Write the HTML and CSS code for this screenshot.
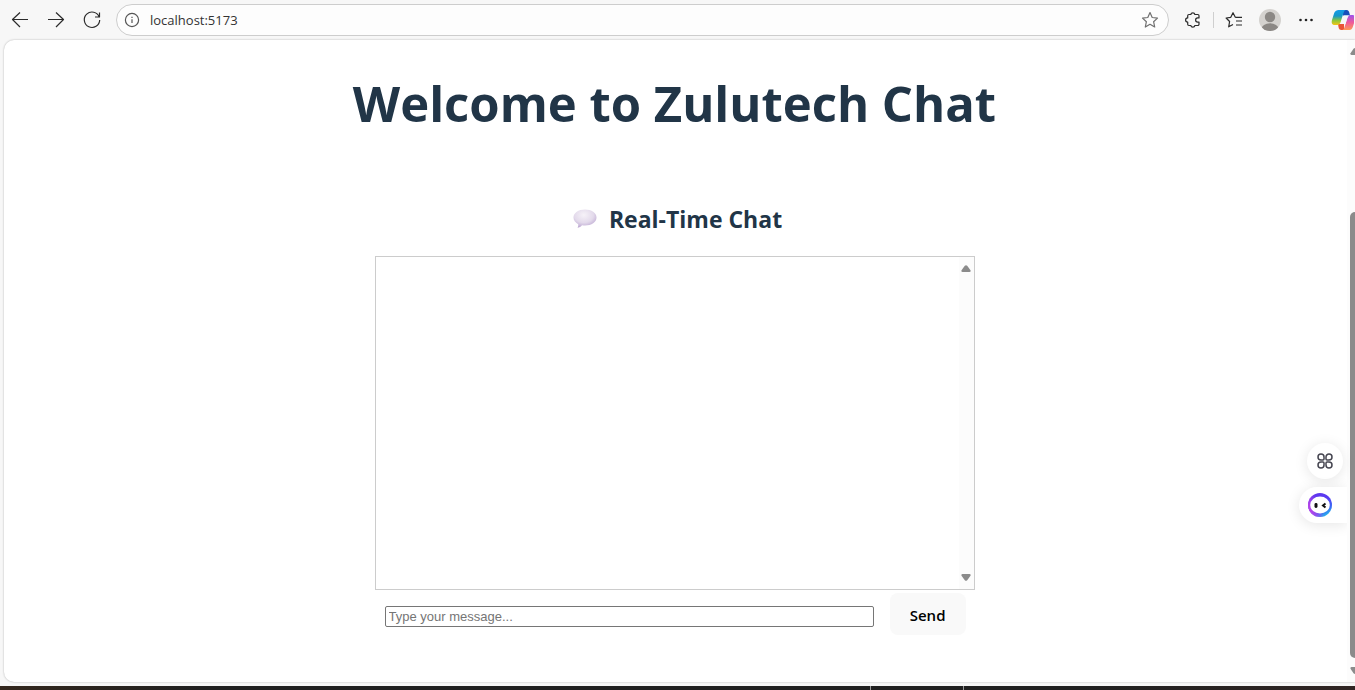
FILE: index.html
```html
<!DOCTYPE html>
<html lang="en">
<head>
<meta charset="utf-8">
<meta name="viewport" content="width=device-width, initial-scale=1">
<title>Zulutech Chat</title>
<link rel="stylesheet" href="styles.css">
</head>
<body>
<header class="toolbar">
  <nav class="nav">
    <button class="tool" aria-label="Back"><svg width="20" height="20" viewBox="0 0 20 20"><path d="M18 9.500H2.500M10 2.500l-7.500 7 7.500 7.500"/></svg></button>
    <button class="tool" aria-label="Forward"><svg width="20" height="20" viewBox="0 0 20 20"><path d="M2 9.500h15.500M10 2.500l7.500 7-7.500 7.500"/></svg></button>
    <button class="tool" aria-label="Refresh"><svg width="20" height="20" viewBox="0 0 20 20"><path d="M17.200 7A7.700 7.700 0 1 0 17.700 10M17.500 2.500V7H13"/></svg></button>
  </nav>
  <div class="address">
    <svg class="info" width="16" height="16" viewBox="0 0 16 16"><circle cx="8" cy="8" r="6.600"/><path d="M8 7.200v3.800M8 4.700v1.300"/></svg>
    <input class="url" aria-label="Address" value="localhost:5173">
    <button class="tool fav" aria-label="Add to favorites"><svg width="18" height="18" viewBox="0 0 18 18"><path d="M9 1.600l2.200 4.900 5.300.600-3.900 3.600 1.100 5.300L9 13.300 4.300 16l1.100-5.300L1.500 7.100l5.300-.600z"/></svg></button>
  </div>
  <div class="actions">
    <button class="tool" aria-label="Extensions"><svg width="18" height="18" viewBox="0 0 18 18"><path d="M4.900 3.500h1.900a2.100 2.100 0 0 1 4.100 0h2.900a1.200 1.200 0 0 1 1.200 1.200v2.200h-1.300a2 2 0 0 0 0 4.200H15v2.200a1.200 1.200 0 0 1-1.200 1.200h-2.900a2.100 2.100 0 0 1-4.100 0H4.900a1.200 1.200 0 0 1-1.200-1.200v-2.200a2.100 2.100 0 0 1 0-4.200V4.700a1.200 1.200 0 0 1 1.200-1.200z"/></svg></button>
    <span class="divider"></span>
    <button class="tool" aria-label="Favorites"><svg width="18" height="18" viewBox="0 0 18 18"><path d="M10.300 6.300 8 1.700 5.800 6.300l-4.700.700 3.500 3.500-.900 5.300L8 13.500M10.300 6.300H17M11 10h6M11 14h6"/></svg></button>
    <button class="tool" aria-label="Profile"><svg width="24" height="24" viewBox="0 0 24 24"><defs><clipPath id="face"><circle cx="12" cy="12" r="11"/></clipPath></defs><g stroke="none" clip-path="url(#face)"><path fill="#d4d2cf" d="M0 0h24v24H0z"/><circle cx="12" cy="9" r="5.200" fill="#8b8885"/><ellipse cx="12" cy="21" rx="8.500" ry="5.800" fill="#8b8885"/></g></svg></button>
    <button class="tool" aria-label="Settings and more"><svg width="18" height="18" viewBox="0 0 18 18"><g fill="#222" stroke="none"><circle cx="3.500" cy="9" r="1.300"/><circle cx="9" cy="9" r="1.300"/><circle cx="14.500" cy="9" r="1.300"/></g></svg></button>
    <button class="tool" aria-label="Copilot"><svg width="24" height="24" viewBox="0 0 24 24">
      <defs>
        <linearGradient id="ca" x1="0" y1="0" x2="0" y2="1"><stop offset="0" stop-color="#139be8"/><stop offset=".4" stop-color="#1597c9"/><stop offset=".7" stop-color="#8cc63b"/><stop offset="1" stop-color="#f6c515"/></linearGradient>
        <linearGradient id="cb" x1="0" y1="0" x2="0" y2="1"><stop offset="0" stop-color="#9d52ed"/><stop offset=".5" stop-color="#ee5a9b"/><stop offset="1" stop-color="#ff9a55"/></linearGradient>
      </defs>
      <g stroke="none" transform="translate(2)"><path fill="#174fba" d="M11 2h3.500c2 0 2.500 1.500 3 3.500l.500 2H11z"/><path fill="#e95435" d="M6 16h6v6H9.500c-2 0-2.700-1.300-3-3z"/><path fill="url(#cb)" d="M17.500 22h-7.300c1.500-.400 2-2 2.500-3.600l2.500-7.900c.700-2.300 1.400-3.500 3.700-3.500H20c3 0 3.800 2 3 5l-2.200 7c-.700 2-1.800 3-3.300 3z"/><path fill="url(#ca)" d="M6.500 2h7.300c-1.500.400-2 2-2.500 3.600L8.800 13.500c-.700 2.300-1.400 3.500-3.700 3.500H3c-3 0-3.800-2-3-5l2.200-7C2.900 3 5 2 6.500 2z"/><path fill="#f7f7f7" d="M12 7.500h5c-1 .700-1.500 2-1.900 3.200L13.500 16H8c.900-.700 1.300-1.600 1.700-2.800z"/></g></svg></button>
  </div>
</header>

<div class="page">
  <main class="content">
    <h1 class="title">Welcome to Zulutech Chat</h1>
    <section class="chat">
      <h2 class="subtitle">
        <svg width="24" height="20" viewBox="0 0 24 20"><defs><radialGradient id="bubble" cx=".45" cy=".3" r=".7"><stop offset="0" stop-color="#f6f2f8"/><stop offset=".6" stop-color="#e3daeb"/><stop offset="1" stop-color="#bda9d2"/></radialGradient></defs><path fill="url(#bubble)" d="M12 .500c6.500 0 11.500 3.400 11.500 8s-5 8-11.500 8c-1 0-2-.100-3-.300-1 1.600-2.800 2.500-4.500 2.500.700-1 .900-2.200.700-3.500C2.300 13.500.500 11.300.500 8.500c0-4.600 5-8 11.500-8z"/></svg>
        Real-Time Chat
      </h2>
      <div class="messages">
        <div class="track"><svg width="10" height="7" viewBox="0 0 10 7"><path d="M3.800.800Q5-.500 6.200.800L9.500 5.300Q10 7 8.500 7h-7Q0 7 .500 5.300z"/></svg><svg width="10" height="7" viewBox="0 0 10 7"><path d="M3.800 6.200Q5 7.500 6.200 6.200L9.500 1.700Q10 0 8.500 0h-7Q0 0 .500 1.700z"/></svg></div>
      </div>
      <form class="composer">
        <input class="field" type="text" aria-label="Message" placeholder="Type your message...">
        <button class="send" type="button">Send</button>
      </form>
    </section>
  </main>
  <div class="scroll">
    <svg width="5" height="7" viewBox="0 0 5 7"><path d="M3.500.800Q4.200 0 5 0v7H1.500Q0 7 .500 5.300z"/></svg>
    <span class="thumb"></span>
    <svg width="5" height="7" viewBox="0 0 5 7"><path d="M3.500 6.200Q4.200 7 5 7V0H1.500Q0 0 .500 1.700z"/></svg>
  </div>
  <aside class="float">
    <button class="apps" aria-label="Tools"><svg width="16" height="16" viewBox="0 0 16 16"><path d="M4 1a3 3 0 0 1 3 3v2q0 1-1 1H4a3 3 0 0 1 0-6zM12 1a3 3 0 0 1 0 6h-2q-1 0-1-1V4a3 3 0 0 1 3-3zM4 9h2q1 0 1 1v2a3 3 0 1 1-3-3zM10 9h2a3 3 0 1 1-3 3v-2q0-1 1-1z"/></svg></button>
    <button class="bot" aria-label="Assistant"><svg width="24" height="24" viewBox="0 0 24 24"><defs><linearGradient id="ring" x1=".2" y1="0" x2=".8" y2="1"><stop offset="0" stop-color="#6136ee"/><stop offset=".45" stop-color="#563cf2"/><stop offset=".75" stop-color="#3b68f5"/><stop offset="1" stop-color="#20d0e8"/></linearGradient><linearGradient id="glow" x1="0" y1=".6" x2=".45" y2=".4"><stop offset="0" stop-color="#c044e8"/><stop offset="1" stop-color="#c044e8" stop-opacity="0"/></linearGradient></defs><circle cx="12" cy="12" r="12" fill="url(#ring)"/><circle cx="12" cy="12" r="12" fill="url(#glow)"/><ellipse cx="12" cy="12" rx="9.800" ry="8.500" fill="#fff"/><rect x="6.500" y="10" width="3" height="5" rx="1.400" fill="#111"/><path d="M17.500 10.500 15 12.500l2.500 2" fill="none" stroke="#111" stroke-width="2"/></svg></button>
  </aside>
</div>
<footer class="taskbar"><span></span><span></span></footer>
</body>
</html>
```

FILE: styles.css
```css
* { box-sizing: border-box; }

body {
  margin: 0;
  min-height: 100vh;
  display: flex;
  flex-direction: column;
  overflow: hidden;
  background: #f7f7f7;
  color: #213547;
  font-family: "Segoe UI", "Open Sans", "Noto Sans", sans-serif;
}

button { font-family: inherit; cursor: pointer; }
svg { display: block; flex: none; }

.toolbar {
  display: flex;
  align-items: center;
  height: 40px;
  padding: 0 1px 0 10px;
}

.nav { display: flex; gap: 16px; }

.tool {
  display: block;
  padding: 0;
  border: 0;
  background: none;
}

.tool svg, .info {
  fill: none;
  stroke: #2b2b2b;
  stroke-width: 1.2;
  stroke-linejoin: round;
}

.address {
  display: flex;
  flex: 1;
  align-items: center;
  gap: 10px;
  height: 32px;
  margin: 0 15px 0 14px;
  padding: 0 9px 0 7px;
  border: 1px solid #cdcdcd;
  border-radius: 16px;
  background: #fdfdfd;
}

.info { stroke: #555; }
.fav svg { stroke: #707070; }

.url {
  flex: 1;
  min-width: 0;
  padding: 0;
  border: 0;
  outline: 0;
  background: none;
  color: #333;
  font: 13px "Segoe UI", "Open Sans", "Noto Sans", sans-serif;
}

.actions { display: flex; align-items: center; gap: 11px; }
.actions .tool:nth-of-type(n + 3) { margin-left: 4px; }
.divider { width: 1px; height: 16px; background: #cfcfcf; }

.page {
  position: relative;
  display: flex;
  flex: 1;
  margin: 0 0 4px 4px;
  border-radius: 10px 0 0 10px;
  background: #fff;
  box-shadow: 0 0 2px rgba(0, 0, 0, .3);
}

.content {
  flex: 1;
  min-width: 0;
  padding: 23px 18px 24px 16px;
  text-align: center;
}

.title {
  margin: 0 0 56px;
  font-size: 49px;
  font-weight: 700;
  line-height: 80px;
}

.chat { max-width: 600px; margin: 0 auto; }

.subtitle {
  display: flex;
  align-items: center;
  justify-content: center;
  gap: 12px;
  margin: 0 0 17px;
  padding-left: 6px;
  font-size: 23px;
  font-weight: 700;
  line-height: 40px;
}

.messages {
  display: flex;
  justify-content: flex-end;
  height: 334px;
  border: 1px solid #ccc;
}

.track {
  display: flex;
  flex-direction: column;
  align-items: center;
  justify-content: space-between;
  width: 15px;
  padding: 8px 0;
  background: #fcfcfc;
}

.track svg, .scroll svg { fill: #8b8b8b; }

.composer {
  display: flex;
  align-items: center;
  gap: 16px;
  padding: 3px 9px 0 10px;
}

.field {
  flex: 1;
  min-width: 0;
  height: 21px;
  margin-top: 4px;
  padding: 1px 3px;
  border: 1px solid #767676;
  border-radius: 2px;
  font: 13px "Liberation Sans", Arial, sans-serif;
}

.field::placeholder { color: #757575; }

.send {
  padding: 11px 20px 9px;
  border: 0;
  border-radius: 8px;
  background: #f9f9f9;
  color: #000;
  font-size: 15px;
  font-weight: 600;
  line-height: 22px;
}

.scroll {
  display: flex;
  flex-direction: column;
  align-items: flex-end;
  width: 8px;
  padding: 8px 0;
  background: #fcfcfc;
}

.thumb {
  width: 5px;
  flex: 1;
  margin: 157px 0 9px;
  border-radius: 5px 0 0 5px;
  background: #8b8b8b;
}

.float {
  position: absolute;
  right: 8px;
  bottom: 159px;
  display: flex;
  flex-direction: column;
  align-items: flex-end;
  gap: 8px;
}

.apps, .bot {
  display: flex;
  align-items: center;
  height: 36px;
  border: 0;
  background: #fff;
  box-shadow: 0 2px 14px rgba(0, 0, 0, .1);
}

.apps {
  justify-content: center;
  width: 36px;
  margin-right: 4px;
  padding: 0;
  border-radius: 18px;
}

.apps svg { fill: none; stroke: #454550; stroke-width: 1.5; }

.bot {
  width: 48px;
  padding: 0 9px;
  border-radius: 18px 0 0 18px;
  clip-path: inset(-20px 0 -20px -20px);
}

.taskbar {
  display: flex;
  justify-content: flex-end;
  gap: 92px;
  height: 4px;
  padding-right: 391px;
  background: linear-gradient(90deg, #33271d, #202020 15%, #202020 80%, #302523);
}

.taskbar span { width: 1px; background: #999; }
```
